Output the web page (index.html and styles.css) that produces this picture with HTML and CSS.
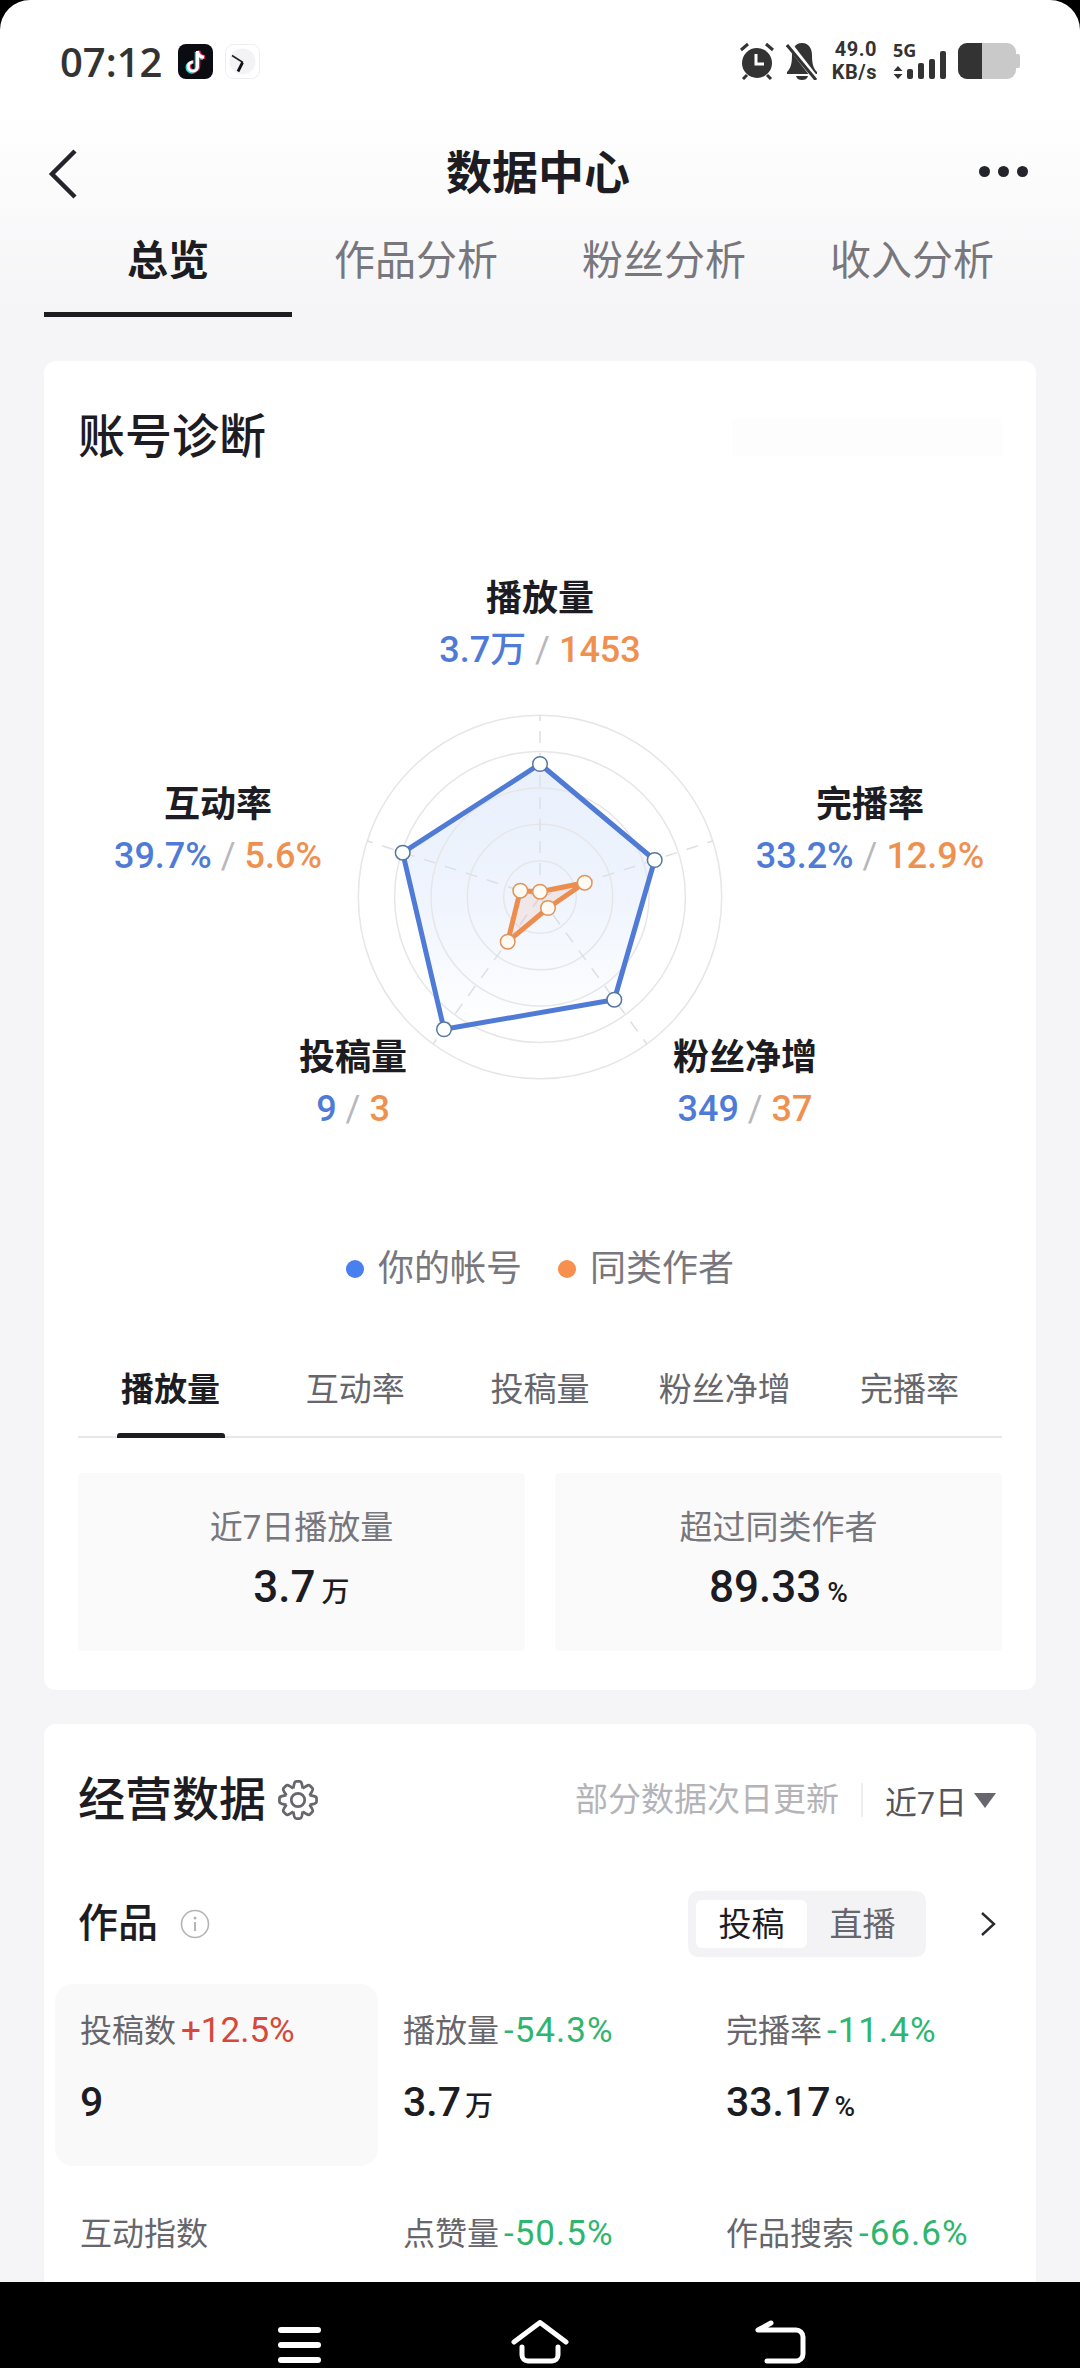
FILE: index.html
```html
<!DOCTYPE html>
<html lang="zh-CN">

<head>
    <meta charset="UTF-8">
    <title>数据中心</title>
    <link rel="stylesheet" href="styles.css">
</head>

<body>
    <div class="screen">
        <div class="status-bar">
            <span class="time">07:12</span>
            <svg class="app-icon" viewBox="0 0 35 35">
                <rect width="35" height="35" rx="8" fill="#0b0b12"/>
                <path d="M19.500 7v15.500a4.600 4.600 0 1 1-4.600-4.600M19.500 7c.4 3.800 2.800 6 6.500 6.300" fill="none" stroke="#25e0e0" stroke-width="3.600" transform="translate(-1 .8)"/>
                <path d="M19.500 7v15.500a4.600 4.600 0 1 1-4.600-4.600M19.500 7c.4 3.800 2.800 6 6.500 6.300" fill="none" stroke="#f0265a" stroke-width="3.600" transform="translate(1 -.2)"/>
                <path d="M19.500 7v15.500a4.600 4.600 0 1 1-4.600-4.600M19.500 7c.4 3.800 2.800 6 6.500 6.300" fill="none" stroke="#fff" stroke-width="3"/>
            </svg>
            <svg class="app-icon clock-app" viewBox="0 0 35 35">
                <rect x=".5" y=".5" width="34" height="34" rx="8" fill="#fff" stroke="#eeeef0"/>
                <circle cx="17.500" cy="17.500" r="13" fill="#f3f3f5"/>
                <path d="M18 18.500 7 11.500" stroke="#222" stroke-width="1.500"/>
                <path d="M17.500 18.500 13 27.500" stroke="#111" stroke-width="2.800"/>
            </svg>
            <div class="status-right">
                <svg width="34" height="38" viewBox="0 0 34 38">
                    <circle cx="17" cy="21" r="15" fill="#333"/>
                    <path d="M16 12v10h8" fill="none" stroke="#fff" stroke-width="3"/>
                    <path d="M1 8l7-6M33 8l-7-6M7 33l-4 4M27 33l4 4" stroke="#333" stroke-width="3"/>
                </svg>
                <svg class="bell" width="32" height="38" viewBox="0 0 32 38">
                    <path d="M16 1c7 0 10 6 10 12 0 8 1 13 5 17v2H1v-2c4-4 5-9 5-17C6 7 9 1 16 1z" fill="#333"/>
                    <path d="M10 34h12c-1 3-3 4-6 4s-5-1-6-4z" fill="#333"/>
                    <path d="M2 1l28 36" stroke="#fff" stroke-width="6"/>
                    <path d="M1 3l29 35" stroke="#333" stroke-width="3"/>
                </svg>
                <div class="net-speed">
                    <span>49.0</span>
                    <span>KB/s</span>
                </div>
                <div class="signal">
                    <span class="five-g">5G</span>
                    <svg width="54" height="22" viewBox="0 0 54 22">
                        <path d="M5 9l4.500 5h-9zM5 22l4.500-5h-9z" fill="#333"/>
                        <rect x="14" y="12" width="6" height="10" rx="2" fill="#333"/>
                        <rect x="25" y="6" width="6" height="16" rx="2" fill="#333"/>
                        <rect x="36" y="2" width="6" height="20" rx="2" fill="#333"/>
                        <rect x="47" y="-6" width="6" height="28" rx="2" fill="#333"/>
                    </svg>
                </div>
                <div class="battery">
                    <div class="battery-level"></div>
                </div>
                <i class="battery-nub"></i>
            </div>
        </div>

        <div class="nav-bar">
            <svg class="back-icon" width="30" height="50" viewBox="0 0 30 50">
                <path d="M27 2 4 25l23 23" fill="none" stroke="#24242b" stroke-width="4.500"/>
            </svg>
            <h1>数据中心</h1>
            <div class="more-dots"><i></i><i></i><i></i></div>
        </div>

        <div class="top-tabs">
            <div class="top-tab active">总览</div>
            <div class="top-tab">作品分析</div>
            <div class="top-tab">粉丝分析</div>
            <div class="top-tab">收入分析</div>
        </div>

        <div class="main">
            <section class="card diagnose">
                <div class="diagnose-head">
                    <h2>账号诊断</h2>
                    <div class="ghost-strip"></div>
                </div>
                <div class="radar">
                    <svg class="radar-chart" width="924" height="640" viewBox="-462 -357 924 640">
                        <defs>
                            <linearGradient id="blueFill" x1="0" y1="0" x2="0" y2="1">
                                <stop offset="0" stop-color="#e9f0fc"/>
                                <stop offset="0.5" stop-color="#eff4fd"/>
                                <stop offset="1" stop-color="#ffffff"/>
                            </linearGradient>
                        </defs>
                        <polygon points="0,-133 114.700,-37 74.300,102.700 -96,132.300 -137.300,-44.300" fill="url(#blueFill)"/>
                        <g class="rings">
                            <circle r="36.300"/>
                            <circle r="72.700"/>
                            <circle r="109"/>
                            <circle r="145.400"/>
                            <circle r="181.700"/>
                        </g>
                        <g class="axes">
                            <line x2="0" y2="-181.700"/>
                            <line x2="172.800" y2="-56"/>
                            <line x2="106.800" y2="147"/>
                            <line x2="-106.800" y2="147"/>
                            <line x2="-172.800" y2="-56"/>
                        </g>
                        <polygon class="line-blue" points="0,-133 114.700,-37 74.300,102.700 -96,132.300 -137.300,-44.300"/>
                        <polygon class="line-orange" points="0,-5.300 44.700,-14.300 8,11 -32.300,44.700 -19.700,-6.300"/>
                        <g class="dots-blue">
                            <circle cx="0" cy="-133" r="7.300"/>
                            <circle cx="114.700" cy="-37" r="7.300"/>
                            <circle cx="74.300" cy="102.700" r="7.300"/>
                            <circle cx="-96" cy="132.300" r="7.300"/>
                            <circle cx="-137.300" cy="-44.300" r="7.300"/>
                        </g>
                        <g class="dots-orange">
                            <circle cx="0" cy="-5.300" r="7.300"/>
                            <circle cx="44.700" cy="-14.300" r="7.300"/>
                            <circle cx="8" cy="11" r="7.300"/>
                            <circle cx="-32.300" cy="44.700" r="7.300"/>
                            <circle cx="-19.700" cy="-6.300" r="7.300"/>
                        </g>
                    </svg>
                    <div class="radar-label label-top">
                        <div class="label-name">播放量</div>
                        <div class="label-value"><span class="blue">3.7万</span> <span class="slash">/</span> <span class="orange">1453</span></div>
                    </div>
                    <div class="radar-label label-left">
                        <div class="label-name">互动率</div>
                        <div class="label-value"><span class="blue">39.7%</span> <span class="slash">/</span> <span class="orange">5.6%</span></div>
                    </div>
                    <div class="radar-label label-right">
                        <div class="label-name">完播率</div>
                        <div class="label-value"><span class="blue">33.2%</span> <span class="slash">/</span> <span class="orange">12.9%</span></div>
                    </div>
                    <div class="radar-label label-bottom-left">
                        <div class="label-name">投稿量</div>
                        <div class="label-value"><span class="blue">9</span> <span class="slash">/</span> <span class="orange">3</span></div>
                    </div>
                    <div class="radar-label label-bottom-right">
                        <div class="label-name">粉丝净增</div>
                        <div class="label-value"><span class="blue">349</span> <span class="slash">/</span> <span class="orange">37</span></div>
                    </div>
                </div>

                <div class="legend">
                    <span class="legend-item"><i class="legend-dot dot-blue"></i>你的帐号</span>
                    <span class="legend-item"><i class="legend-dot dot-orange"></i>同类作者</span>
                </div>

                <div class="sub-tabs">
                    <div class="sub-tab active">播放量</div>
                    <div class="sub-tab">互动率</div>
                    <div class="sub-tab">投稿量</div>
                    <div class="sub-tab">粉丝净增</div>
                    <div class="sub-tab">完播率</div>
                </div>

                <div class="stat-row">
                    <div class="stat-box">
                        <div class="stat-label">近7日播放量</div>
                        <div class="stat-value">3.7<small>万</small></div>
                    </div>
                    <div class="stat-box">
                        <div class="stat-label">超过同类作者</div>
                        <div class="stat-value">89.33<small>%</small></div>
                    </div>
                </div>
            </section>

            <section class="card business">
                <div class="business-head">
                    <h2>经营数据</h2>
                    <svg class="gear" width="40" height="40" viewBox="-12.500 -12.500 25 25">
                        <defs>
                            <path id="cogLobe" d="M7.200-3 10-2.400Q11.600-2 11.600-1V1Q11.600 2 10 2.400L7.200 3"/>
                        </defs>
                        <g class="gear-lines">
                            <use href="#cogLobe"/>
                            <use href="#cogLobe" transform="rotate(45)"/>
                            <use href="#cogLobe" transform="rotate(90)"/>
                            <use href="#cogLobe" transform="rotate(135)"/>
                            <use href="#cogLobe" transform="rotate(180)"/>
                            <use href="#cogLobe" transform="rotate(225)"/>
                            <use href="#cogLobe" transform="rotate(270)"/>
                            <use href="#cogLobe" transform="rotate(315)"/>
                            <circle r="4.200"/>
                        </g>
                    </svg>
                    <span class="update-note">部分数据次日更新</span>
                    <span class="range">近7日</span>
                    <i class="range-arrow"></i>
                </div>

                <div class="works-head">
                    <h3>作品</h3>
                    <svg class="info" width="30" height="30" viewBox="0 0 30 30">
                        <circle cx="15" cy="15" r="13.500" fill="none" stroke="#b4b4b8" stroke-width="1.600"/>
                        <circle cx="15" cy="9" r="1.500" fill="#b4b4b8"/>
                        <path d="M15 13v9" stroke="#b4b4b8" stroke-width="2"/>
                    </svg>
                    <div class="toggle">
                        <span class="toggle-item active">投稿</span>
                        <span class="toggle-item">直播</span>
                    </div>
                    <svg class="chevron" width="16" height="26" viewBox="0 0 16 26">
                        <path d="M2 2l12 11L2 24" fill="none" stroke="#2a2a30" stroke-width="2.400"/>
                    </svg>
                </div>

                <div class="metrics">
                    <div class="metric selected">
                        <div class="metric-label">投稿数<span class="up">+12.5%</span></div>
                        <div class="metric-value">9</div>
                    </div>
                    <div class="metric">
                        <div class="metric-label">播放量<span class="down">-54.3%</span></div>
                        <div class="metric-value">3.7<small>万</small></div>
                    </div>
                    <div class="metric">
                        <div class="metric-label">完播率<span class="down">-11.4%</span></div>
                        <div class="metric-value">33.17<small>%</small></div>
                    </div>
                    <div class="metric">
                        <div class="metric-label">互动指数</div>
                    </div>
                    <div class="metric">
                        <div class="metric-label">点赞量<span class="down">-50.5%</span></div>
                    </div>
                    <div class="metric">
                        <div class="metric-label">作品搜索<span class="down">-66.6%</span></div>
                    </div>
                </div>
            </section>
        </div>

        <div class="system-nav">
            <svg class="nav-menu" width="48" height="38" viewBox="0 0 48 38">
                <path d="M4 4H41M4 19H41M4 34H41" stroke="#fff" stroke-width="6" stroke-linecap="round"/>
            </svg>
            <svg width="60" height="44" viewBox="0 0 60 44">
                <path d="M4 22 30 2.500 56 22M12 27v8a6 6 0 0 0 6 6h24a6 6 0 0 0 6-6v-8" fill="none" stroke="#fff" stroke-width="5" stroke-linecap="round" stroke-linejoin="round"/>
            </svg>
            <svg width="52" height="44" viewBox="0 0 52 44">
                <path d="M16 3 3 10H41a7 7 0 0 1 7 7V34a7 7 0 0 1-7 7H12" fill="none" stroke="#fff" stroke-width="5" stroke-linecap="round" stroke-linejoin="round"/>
            </svg>
        </div>
    </div>
</body>

</html>
```

FILE: styles.css
```css
* {
    box-sizing: border-box;
}

html,
body {
    margin: 0;
    background: #000;
}

body {
    font-family: Roboto, 'Noto Sans CJK SC', sans-serif;
    color: #1c1c22;
}

h1,
h2,
h3 {
    margin: 0;
}

.screen {
    width: 1080px;
    height: 2368px;
    display: flex;
    flex-direction: column;
    overflow: hidden;
    border-radius: 30px 30px 0 0;
    background: linear-gradient(to bottom, #ffffff 110px, #f5f5f7 310px);
}

/* status bar */
.status-bar {
    height: 122px;
    flex: none;
    display: flex;
    align-items: center;
    padding: 0 60px;
}

.time {
    font-family: 'Open Sans', sans-serif;
    font-size: 40px;
    font-weight: 600;
    color: #333;
    width: 118px;
}

.clock-app {
    margin-left: 12px;
}

.app-icon {
    width: 35px;
    height: 35px;
}

.status-right {
    margin-left: auto;
    display: flex;
    align-items: center;
}

.bell {
    margin-left: 12px;
}

.net-speed {
    margin-left: 14px;
    display: flex;
    flex-direction: column;
    align-items: flex-end;
    font-family: Roboto, sans-serif;
    font-size: 20px;
    line-height: 23px;
    letter-spacing: 0.5px;
    font-weight: 700;
    color: #333;
}

.signal {
    margin-left: 16px;
    width: 54px;
    display: flex;
    flex-direction: column;
    font-family: 'Open Sans', sans-serif;
}

.five-g {
    font-size: 18px;
    line-height: 14px;
    font-weight: 700;
    color: #333;
}

.signal svg {
    overflow: visible;
}

.battery {
    width: 58px;
    height: 36px;
    margin-left: 11px;
    border-radius: 9px;
    background: #c9c9c9;
    overflow: hidden;
}

.battery-level {
    width: 24px;
    height: 100%;
    background: #333;
}

.battery-nub {
    width: 4px;
    height: 14px;
    background: #c9c9c9;
    border-radius: 0 2px 2px 0;
}

/* title */
.nav-bar {
    height: 104px;
    flex: none;
    display: grid;
    grid-template-columns: 1fr auto 1fr;
    align-items: center;
    padding: 0 52px 0 48px;
}

.nav-bar h1 {
    font-size: 46px;
    font-weight: 700;
    line-height: 60px;
    margin-bottom: 2px;
}

.more-dots {
    justify-self: end;
    display: flex;
    gap: 8px;
    margin-bottom: 6px;
}

.more-dots i {
    width: 11px;
    height: 11px;
    border-radius: 50%;
    background: #24242b;
}

.top-tabs {
    flex: none;
    display: grid;
    grid-template-columns: repeat(4, 248px);
    margin: 0 44px;
}

.top-tab {
    height: 91px;
    padding-bottom: 29px;
    display: flex;
    align-items: center;
    justify-content: center;
    font-size: 41px;
    color: #77777d;
}

.top-tab.active {
    font-weight: 700;
    color: #1c1c22;
    border-bottom: 5px solid #1c1c22;
    padding-bottom: 24px;
}

.main {
    flex: 1;
    min-height: 0;
    overflow: hidden;
    padding: 44px 44px 0;
}

.card {
    background: #ffffff;
    border-radius: 12px;
    padding: 46px 34px 39px;
}

.card h2 {
    font-size: 47px;
    font-weight: 500;
    line-height: 60px;
}

.diagnose-head {
    display: flex;
    justify-content: space-between;
    align-items: center;
}

.ghost-strip {
    width: 270px;
    height: 38px;
    background: #fdfdfd;
}

/* radar */
.radar {
    position: relative;
    height: 640px;
    margin-top: 73px;
}

.radar-chart {
    display: block;
}

.rings circle {
    fill: none;
    stroke: #e6e6e8;
    stroke-width: 1.5;
}

.axes line {
    stroke: #dedfe6;
    stroke-width: 1.5;
    stroke-dasharray: 12 10;
}

.line-blue {
    fill: none;
    stroke: #4f7bd6;
    stroke-width: 5;
    stroke-linejoin: round;
}

.line-orange {
    fill: rgba(240, 150, 110, 0.14);
    stroke: #ec8d4f;
    stroke-width: 5;
    stroke-linejoin: round;
}

.dots-blue circle {
    fill: #fff;
    stroke: #55789f;
    stroke-width: 1.5;
}

.dots-orange circle {
    fill: #fffaf4;
    stroke: #e0945a;
    stroke-width: 1.5;
}

.radar-label {
    position: absolute;
    transform: translateX(-50%);
    text-align: center;
    white-space: nowrap;
    font-size: 36px;
}

.label-name {
    font-weight: 700;
    line-height: 50px;
}

.label-value {
    font-weight: 500;
    line-height: 53px;
}

.label-top {
    left: 462px;
    top: 34px;
}

.label-left {
    left: 140px;
    top: 240px;
}

.label-right {
    left: 792px;
    top: 240px;
}

.label-bottom-left {
    left: 275px;
    top: 493px;
}

.label-bottom-right {
    left: 667px;
    top: 493px;
}

.blue {
    color: #4f7bd6;
}

.orange {
    color: #ee9150;
}

.slash {
    color: #b8b8bc;
    font-weight: 400;
}

/* legend */
.legend {
    margin-top: 64px;
    display: flex;
    justify-content: center;
    gap: 36px;
    font-size: 36px;
    line-height: 50px;
    color: #77777d;
}

.legend-item {
    display: flex;
    align-items: center;
}

.legend-dot {
    width: 18px;
    height: 18px;
    border-radius: 50%;
    margin-right: 14px;
}

.dot-blue {
    background: #4a7ff0;
}

.dot-orange {
    background: #f78f4e;
}

/* sub tabs */
.sub-tabs {
    margin-top: 46px;
    height: 98px;
    display: grid;
    grid-template-columns: repeat(5, 1fr);
    border-bottom: 2px solid #e8e8ea;
}

.sub-tab {
    position: relative;
    display: flex;
    align-items: center;
    justify-content: center;
    padding-bottom: 2px;
    font-size: 33px;
    color: #66666c;
}

.sub-tab.active {
    font-weight: 700;
    color: #1c1c22;
}

.sub-tab.active::after {
    content: "";
    position: absolute;
    left: 39px;
    right: 38px;
    bottom: -2px;
    height: 5px;
    border-radius: 3px 3px 0 0;
    background: #1c1c22;
}

/* stat boxes */
.stat-row {
    margin-top: 35px;
    display: grid;
    grid-template-columns: 1fr 1fr;
    gap: 30px;
}

.stat-box {
    height: 178px;
    padding-top: 30px;
    text-align: center;
    background: #fafafb;
    border-radius: 4px;
}

.stat-label {
    font-size: 33px;
    line-height: 50px;
    color: #77777d;
}

.stat-value {
    font-size: 44px;
    font-weight: 500;
    line-height: 68px;
}

.stat-value small,
.metric-value small {
    font-size: 28px;
    font-weight: 500;
    margin-left: 6px;
}

/* business data */
.business {
    margin-top: 34px;
}

.business-head {
    display: flex;
    align-items: center;
}

.gear {
    margin-left: 12px;
}

.gear-lines {
    fill: none;
    stroke: #66666c;
    stroke-width: 1.7;
    stroke-linejoin: round;
}

.update-note {
    margin-left: auto;
    padding-right: 22px;
    border-right: 2px solid #eeeef0;
    font-size: 33px;
    line-height: 34px;
    color: #b4b4b8;
}

.range {
    margin-left: 22px;
    font-size: 32px;
    color: #55555b;
}

.range-arrow {
    width: 0;
    height: 0;
    margin: 0 6px 0 7px;
    border-left: 11px solid transparent;
    border-right: 11px solid transparent;
    border-top: 15px solid #66666c;
}

.works-head {
    margin-top: 61px;
    height: 66px;
    display: flex;
    align-items: center;
}

.works-head h3 {
    font-size: 40px;
    font-weight: 500;
    line-height: 50px;
    margin-bottom: 1px;
}

.info {
    margin-left: 22px;
}

.toggle {
    margin-left: auto;
    height: 66px;
    width: 238px;
    padding: 9px 8px;
    display: flex;
    background: #f3f3f5;
    border-radius: 10px;
}

.toggle-item {
    flex: 1;
    display: flex;
    align-items: center;
    justify-content: center;
    padding-bottom: 5px;
    font-size: 33px;
    color: #66666c;
}

.toggle-item.active {
    background: #fff;
    border-radius: 6px;
    color: #1c1c22;
}

.chevron {
    margin: 0 6px 0 54px;
}

.metrics {
    margin: 27px 0 0 -23px;
    display: grid;
    grid-template-columns: repeat(3, 323px);
    grid-auto-rows: 182px;
    row-gap: 21px;
}

.metric {
    padding: 22px 0 0 25px;
}

.metric.selected {
    background: #f9f9fa;
    border-radius: 18px;
}

.metric-label {
    font-size: 32px;
    line-height: 50px;
    color: #66666c;
    white-space: nowrap;
}

.up,
.down {
    font-size: 35px;
    margin-left: 5px;
}

.up {
    color: #d5483a;
}

.down {
    color: #2fb56e;
    letter-spacing: 1px;
}

.metric-value {
    margin-top: 16px;
    font-size: 41px;
    font-weight: 500;
    line-height: 60px;
}

.metric-value small {
    margin-left: 4px;
}

/* system bar */
.system-nav {
    height: 86px;
    flex: none;
    background: #000;
    display: flex;
    justify-content: center;
    align-items: flex-start;
    gap: 185px;
    padding: 38px 0 0 4px;
}

.nav-menu {
    margin-top: 6px;
}
```
